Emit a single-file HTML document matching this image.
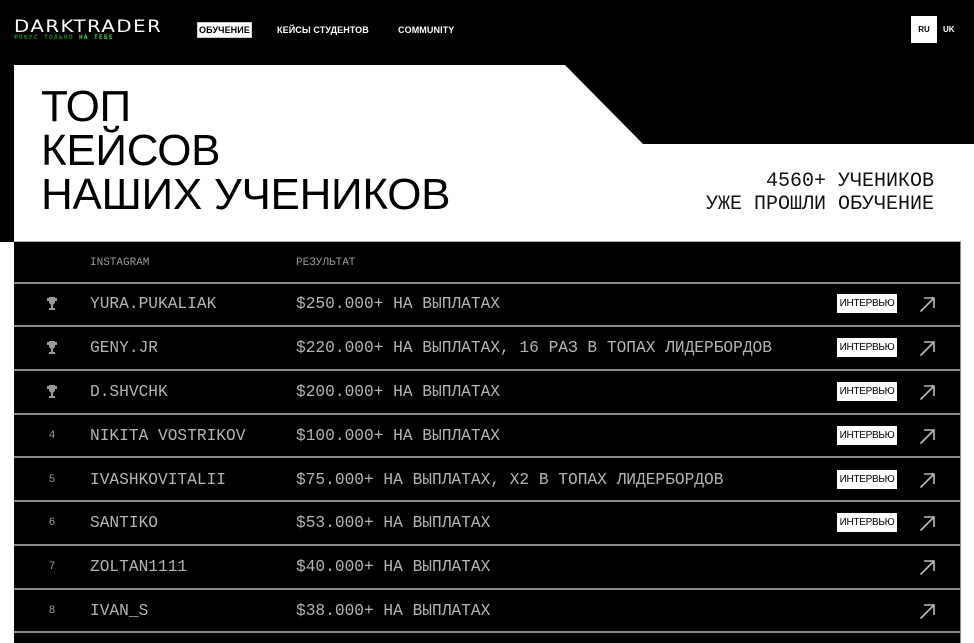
<!DOCTYPE html>
<html><head><meta charset="utf-8"><style>
*{margin:0;padding:0;box-sizing:border-box}
body{width:974px;height:643px;overflow:hidden;background:#fff;position:relative;font-family:"Liberation Sans",sans-serif}
.topbar{position:absolute;left:0;top:0;width:974px;height:144px;background:#000}
.leftbar{position:absolute;left:0;top:0;width:14px;height:242px;background:#000}
.logo{position:absolute;left:14px;top:17px;color:#fff;font-size:17px;letter-spacing:1.3px;font-family:"DejaVu Sans","Liberation Sans",sans-serif;transform:scaleX(1.16);transform-origin:left}
.tag{position:absolute;left:14px;top:34px;font-family:"Liberation Mono",monospace;font-size:6px;font-weight:bold;color:#1a8f1a;letter-spacing:1.4px}
.tag b{color:#3ddc3d}
.nav{position:absolute;top:25px;font-family:"Liberation Sans",sans-serif;font-size:9px;font-weight:bold;color:#fff;letter-spacing:0.1px}
.nav.active{background:#fff;color:#000;padding:2px 1px;top:22px;border:1px solid #ccc}
.ru{position:absolute;left:911px;top:16px;width:26px;height:27px;background:#fff;color:#000;font-size:8px;font-weight:bold;text-align:center;line-height:27px}
.uk{position:absolute;left:943px;top:16px;color:#fff;font-size:8px;font-weight:bold;line-height:27px}
.hero{position:absolute;left:14px;top:65px;width:947px;height:177px;background:#fff;border-bottom:1px solid #aaa}
.cut{position:absolute;left:0;top:0}
h1{position:absolute;left:41px;top:85px;font-weight:normal;font-size:44px;line-height:44px;color:#000;letter-spacing:-0.3px}
.stat{position:absolute;right:40px;top:170px;text-align:right;font-family:"Liberation Mono",monospace;font-size:20px;line-height:23px;color:#111}
.table{position:absolute;left:14px;top:242px;width:947px;height:401px;background:#000;border-right:1px solid #888}
.hd{position:absolute;top:257px;font-family:"Liberation Mono",monospace;font-size:11px;color:#999}
.line{position:absolute;left:14px;width:947px;height:2px;background:#8a8a8a}
.row{position:absolute;left:0;width:974px;height:20px;font-family:"Liberation Mono",monospace;color:#b4b4b4;font-size:16.2px;line-height:20px}
.row .n{position:absolute;left:44px;width:16px;text-align:center;font-size:11px;color:#999}
.row .ig{position:absolute;left:90px}
.row .rs{position:absolute;left:296px}
.row .bd{position:absolute;left:837px;top:0;width:60px;height:19px;background:#fff;color:#000;font-family:"Liberation Sans",sans-serif;font-size:10px;line-height:19px;text-align:center;letter-spacing:-0.3px}
.row svg{position:absolute}
</style></head><body>
<div class="topbar"></div>
<div class="leftbar"></div>
<div class="logo">DARKTRADER</div>
<div class="tag">ФОКУС ТОЛЬКО <b>НА ТЕБЕ</b></div>
<div class="nav active" style="left:197px">ОБУЧЕНИЕ</div>
<div class="nav" style="left:277px">КЕЙСЫ СТУДЕНТОВ</div>
<div class="nav" style="left:398px">COMMUNITY</div>
<div class="ru">RU</div><div class="uk">UK</div>
<div class="hero"><svg class="cut" width="947" height="80"><polygon points="551,0 947,0 947,79 629,79" fill="#000"/></svg></div>
<h1>ТОП<br>КЕЙСОВ<br>НАШИХ УЧЕНИКОВ</h1>
<div class="stat">4560+ УЧЕНИКОВ<br>УЖЕ ПРОШЛИ ОБУЧЕНИЕ</div>
<div class="table"></div>
<div class="hd" style="left:90px">INSTAGRAM</div>
<div class="hd" style="left:296px">РЕЗУЛЬТАТ</div>
<div class="line" style="top:282px"></div>
<div class="line" style="top:325px"></div>
<div class="line" style="top:369px"></div>
<div class="line" style="top:413px"></div>
<div class="line" style="top:456px"></div>
<div class="line" style="top:500px"></div>
<div class="line" style="top:544px"></div>
<div class="line" style="top:588px"></div>
<div class="line" style="top:631px"></div>

<div class="row" style="top:294px"><svg style="left:46px;top:3px" width="12" height="14" viewBox="0 0 12 14"><path d="M3 0h6v5a3 3 0 0 1-6 0z M1 1h2v3H1z M9 1h2v3H9z M5 8h2v3H5z M3 11h6v2H3z" fill="#9a9a9a"/></svg><span class="ig">YURA.PUKALIAK</span><span class="rs">$250.000+ НА ВЫПЛАТАХ</span><span class="bd">ИНТЕРВЬЮ</span><svg style="left:919px;top:2px" width="17" height="17"><path d="M1.5 15.5L15 2M5 2h10v10" stroke="#bbb" stroke-width="1.6" fill="none"/></svg></div>
<div class="row" style="top:338px"><svg style="left:46px;top:3px" width="12" height="14" viewBox="0 0 12 14"><path d="M3 0h6v5a3 3 0 0 1-6 0z M1 1h2v3H1z M9 1h2v3H9z M5 8h2v3H5z M3 11h6v2H3z" fill="#9a9a9a"/></svg><span class="ig">GENY.JR</span><span class="rs">$220.000+ НА ВЫПЛАТАХ, 16 РАЗ В ТОПАХ ЛИДЕРБОРДОВ</span><span class="bd">ИНТЕРВЬЮ</span><svg style="left:919px;top:2px" width="17" height="17"><path d="M1.5 15.5L15 2M5 2h10v10" stroke="#bbb" stroke-width="1.6" fill="none"/></svg></div>
<div class="row" style="top:382px"><svg style="left:46px;top:3px" width="12" height="14" viewBox="0 0 12 14"><path d="M3 0h6v5a3 3 0 0 1-6 0z M1 1h2v3H1z M9 1h2v3H9z M5 8h2v3H5z M3 11h6v2H3z" fill="#9a9a9a"/></svg><span class="ig">D.SHVCHK</span><span class="rs">$200.000+ НА ВЫПЛАТАХ</span><span class="bd">ИНТЕРВЬЮ</span><svg style="left:919px;top:2px" width="17" height="17"><path d="M1.5 15.5L15 2M5 2h10v10" stroke="#bbb" stroke-width="1.6" fill="none"/></svg></div>
<div class="row" style="top:426px"><span class="n">4</span><span class="ig">NIKITA VOSTRIKOV</span><span class="rs">$100.000+ НА ВЫПЛАТАХ</span><span class="bd">ИНТЕРВЬЮ</span><svg style="left:919px;top:2px" width="17" height="17"><path d="M1.5 15.5L15 2M5 2h10v10" stroke="#bbb" stroke-width="1.6" fill="none"/></svg></div>
<div class="row" style="top:470px"><span class="n">5</span><span class="ig">IVASHKOVITALII</span><span class="rs">$75.000+ НА ВЫПЛАТАХ, X2 В ТОПАХ ЛИДЕРБОРДОВ</span><span class="bd">ИНТЕРВЬЮ</span><svg style="left:919px;top:2px" width="17" height="17"><path d="M1.5 15.5L15 2M5 2h10v10" stroke="#bbb" stroke-width="1.6" fill="none"/></svg></div>
<div class="row" style="top:513px"><span class="n">6</span><span class="ig">SANTIKO</span><span class="rs">$53.000+ НА ВЫПЛАТАХ</span><span class="bd">ИНТЕРВЬЮ</span><svg style="left:919px;top:2px" width="17" height="17"><path d="M1.5 15.5L15 2M5 2h10v10" stroke="#bbb" stroke-width="1.6" fill="none"/></svg></div>
<div class="row" style="top:557px"><span class="n">7</span><span class="ig">ZOLTAN1111</span><span class="rs">$40.000+ НА ВЫПЛАТАХ</span><svg style="left:919px;top:2px" width="17" height="17"><path d="M1.5 15.5L15 2M5 2h10v10" stroke="#bbb" stroke-width="1.6" fill="none"/></svg></div>
<div class="row" style="top:601px"><span class="n">8</span><span class="ig">IVAN_S</span><span class="rs">$38.000+ НА ВЫПЛАТАХ</span><svg style="left:919px;top:2px" width="17" height="17"><path d="M1.5 15.5L15 2M5 2h10v10" stroke="#bbb" stroke-width="1.6" fill="none"/></svg></div>
</body></html>
